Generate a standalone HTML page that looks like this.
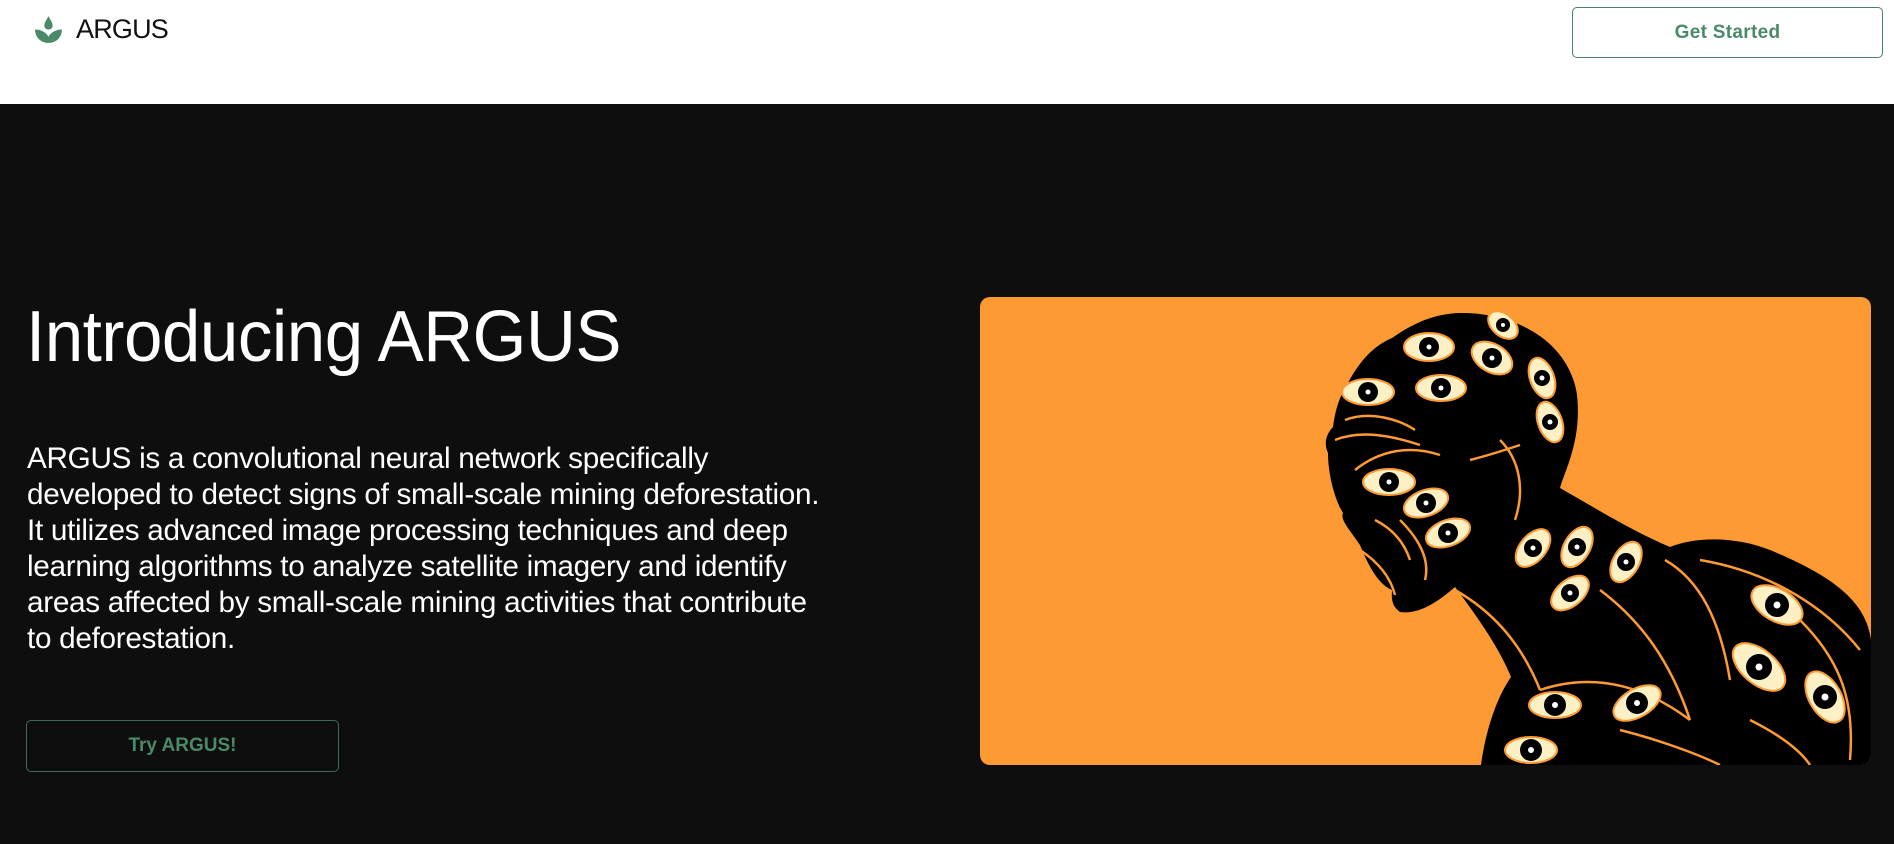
<!DOCTYPE html>
<html><head><meta charset="utf-8">
<style>
*{margin:0;padding:0;box-sizing:border-box}
html,body{width:1894px;height:844px;overflow:hidden;background:#0e0e0e;font-family:"Liberation Sans",sans-serif}
.nav{position:absolute;left:0;top:0;width:1894px;height:104px;background:#fff}
.logo{position:absolute;left:76px;top:14px;font-size:27px;color:#111;letter-spacing:-0.8px}
.gs{position:absolute;left:1572px;top:7px;width:311px;height:51px;border:1.5px solid #4e7f68;border-radius:5px;color:#4b8a68;font-weight:bold;font-size:19px;display:flex;align-items:center;justify-content:center;letter-spacing:0.3px}
h1{position:absolute;left:26px;top:296px;font-weight:normal;color:#fff;font-size:72px;white-space:nowrap;transform-origin:0 0;transform:scaleX(0.96);letter-spacing:-0.5px}
p{position:absolute;left:27px;top:441px;width:900px;color:#fff;font-size:30px;line-height:36px;transform-origin:0 0;transform:scaleX(0.99);letter-spacing:-0.3px;white-space:nowrap}
.try{position:absolute;left:26px;top:720px;width:313px;height:52px;border:1.5px solid #3f6b56;border-radius:5px;color:#4b8a68;font-weight:bold;font-size:19px;display:flex;align-items:center;justify-content:center}
.img{position:absolute;left:980px;top:297px;width:891px;height:468px;border-radius:10px;overflow:hidden;background:#fe9a33}
</style></head><body>
<div class="nav">
<svg style="position:absolute;left:33px;top:14px" width="31" height="31" viewBox="0 0 30 30">
<path d="M15 2 C17 6 19 8 19 11 C19 14 17 15 15 15 C13 15 11 14 11 11 C11 8 13 6 15 2Z" fill="#4a8a68"/>
<path d="M2 15 C8 15 13 18 15 22 C17 18 22 15 28 15 C28 23 22 28 15 28 C8 28 2 23 2 15Z" fill="#4a8a68"/>
</svg>
<div class="logo">ARGUS</div>
<div class="gs">Get Started</div>
</div>
<h1>Introducing ARGUS</h1>
<p>ARGUS is a convolutional neural network specifically<br>developed to detect signs of small-scale mining deforestation.<br>It utilizes advanced image processing techniques and deep<br>learning algorithms to analyze satellite imagery and identify<br>areas affected by small-scale mining activities that contribute<br>to deforestation.</p>
<div class="try">Try ARGUS!</div>
<div class="img">
<svg width="891" height="468" viewBox="980 297 891 468">
<path fill="#000" d="M1459 313 C1520 312 1570 345 1577 395 C1582 440 1565 470 1560 488 C1590 505 1630 530 1670 547 C1700 535 1740 538 1770 550 C1830 575 1866 600 1871 640 L1871 765 L1481 765 C1485 735 1495 700 1511 677 C1500 650 1480 620 1455 587 C1440 600 1420 615 1400 612 C1390 605 1392 595 1392 590 C1380 585 1370 570 1360 545 C1350 530 1340 520 1343 513 C1335 500 1328 475 1328 453 C1322 440 1330 430 1333 427 C1335 410 1340 395 1348 383 C1360 360 1375 345 1392 338 C1415 322 1435 314 1459 313Z"/>
<g fill="none" stroke="#fe9a33" stroke-width="2.5">
<path d="M1335 440 C1360 430 1390 435 1420 445"/>
<path d="M1355 470 C1380 450 1410 445 1440 455"/>
<path d="M1345 420 C1370 410 1400 420 1415 430"/>
<path d="M1360 550 C1375 560 1390 575 1395 595"/>
<path d="M1375 520 C1395 530 1405 545 1410 560"/>
<path d="M1455 590 C1490 610 1520 640 1540 690"/>
<path d="M1600 590 C1640 620 1670 660 1690 720"/>
<path d="M1665 560 C1700 580 1720 620 1730 680"/>
<path d="M1540 690 C1600 670 1650 690 1690 720"/>
<path d="M1700 560 C1760 570 1820 600 1860 650"/>
<path d="M1500 440 C1520 460 1525 490 1515 520"/>
<path d="M1400 520 C1420 540 1430 560 1425 580"/>
<path d="M1800 620 C1840 660 1855 700 1850 760"/>
<path d="M1470 460 C1490 455 1505 450 1520 445"/>
<path d="M1620 730 C1660 740 1700 755 1720 765"/>
<path d="M1750 720 C1780 735 1800 750 1810 765"/>
</g>
<g fill="#fdf0c4" stroke="#fe9a33" stroke-width="2">
<ellipse cx="1429" cy="347" rx="25" ry="14"/><ellipse cx="1492" cy="358" rx="22" ry="14" transform="rotate(30 1492 358)"/><ellipse cx="1503" cy="325" rx="17" ry="11" transform="rotate(40 1503 325)"/><ellipse cx="1542" cy="378" rx="21" ry="12" transform="rotate(70 1542 378)"/><ellipse cx="1368" cy="392" rx="26" ry="13"/><ellipse cx="1441" cy="388" rx="25" ry="13"/><ellipse cx="1550" cy="422" rx="21" ry="12" transform="rotate(70 1550 422)"/><ellipse cx="1389" cy="482" rx="26" ry="13"/><ellipse cx="1426" cy="503" rx="23" ry="13" transform="rotate(-20 1426 503)"/><ellipse cx="1448" cy="533" rx="23" ry="13" transform="rotate(-20 1448 533)"/><ellipse cx="1533" cy="548" rx="22" ry="13" transform="rotate(-50 1533 548)"/><ellipse cx="1577" cy="547" rx="22" ry="13" transform="rotate(-60 1577 547)"/><ellipse cx="1626" cy="562" rx="22" ry="13" transform="rotate(-60 1626 562)"/><ellipse cx="1570" cy="593" rx="22" ry="13" transform="rotate(-40 1570 593)"/><ellipse cx="1777" cy="605" rx="28" ry="16" transform="rotate(30 1777 605)"/><ellipse cx="1759" cy="667" rx="31" ry="17" transform="rotate(40 1759 667)"/><ellipse cx="1825" cy="697" rx="28" ry="16" transform="rotate(60 1825 697)"/><ellipse cx="1555" cy="705" rx="26" ry="13"/><ellipse cx="1637" cy="703" rx="26" ry="14" transform="rotate(-30 1637 703)"/><ellipse cx="1531" cy="750" rx="26" ry="13"/>
</g>
<g fill="#000">
<circle cx="1429" cy="347" r="10"/><circle cx="1492" cy="358" r="10"/><circle cx="1503" cy="325" r="7"/><circle cx="1542" cy="378" r="8"/><circle cx="1368" cy="392" r="10"/><circle cx="1441" cy="388" r="10"/><circle cx="1550" cy="422" r="8"/><circle cx="1389" cy="482" r="10"/><circle cx="1426" cy="503" r="10"/><circle cx="1448" cy="533" r="10"/><circle cx="1533" cy="548" r="9"/><circle cx="1577" cy="547" r="9"/><circle cx="1626" cy="562" r="9"/><circle cx="1570" cy="593" r="9"/><circle cx="1777" cy="605" r="12"/><circle cx="1759" cy="667" r="13"/><circle cx="1825" cy="697" r="12"/><circle cx="1555" cy="705" r="11"/><circle cx="1637" cy="703" r="11"/><circle cx="1531" cy="750" r="11"/>
</g>
<g fill="#fff">
<circle cx="1429" cy="347" r="2.5"/><circle cx="1492" cy="358" r="2.5"/><circle cx="1503" cy="325" r="2"/><circle cx="1542" cy="378" r="2.5"/><circle cx="1368" cy="392" r="2.5"/><circle cx="1441" cy="388" r="2.5"/><circle cx="1550" cy="422" r="2.5"/><circle cx="1389" cy="482" r="2.5"/><circle cx="1426" cy="503" r="2.5"/><circle cx="1448" cy="533" r="2.5"/><circle cx="1533" cy="548" r="2.5"/><circle cx="1577" cy="547" r="2.5"/><circle cx="1626" cy="562" r="2.5"/><circle cx="1570" cy="593" r="2.5"/><circle cx="1777" cy="605" r="3.5"/><circle cx="1759" cy="667" r="3.5"/><circle cx="1825" cy="697" r="3.5"/><circle cx="1555" cy="705" r="3"/><circle cx="1637" cy="703" r="3"/><circle cx="1531" cy="750" r="3"/>
</g>
</svg>
</div>
</body></html>
